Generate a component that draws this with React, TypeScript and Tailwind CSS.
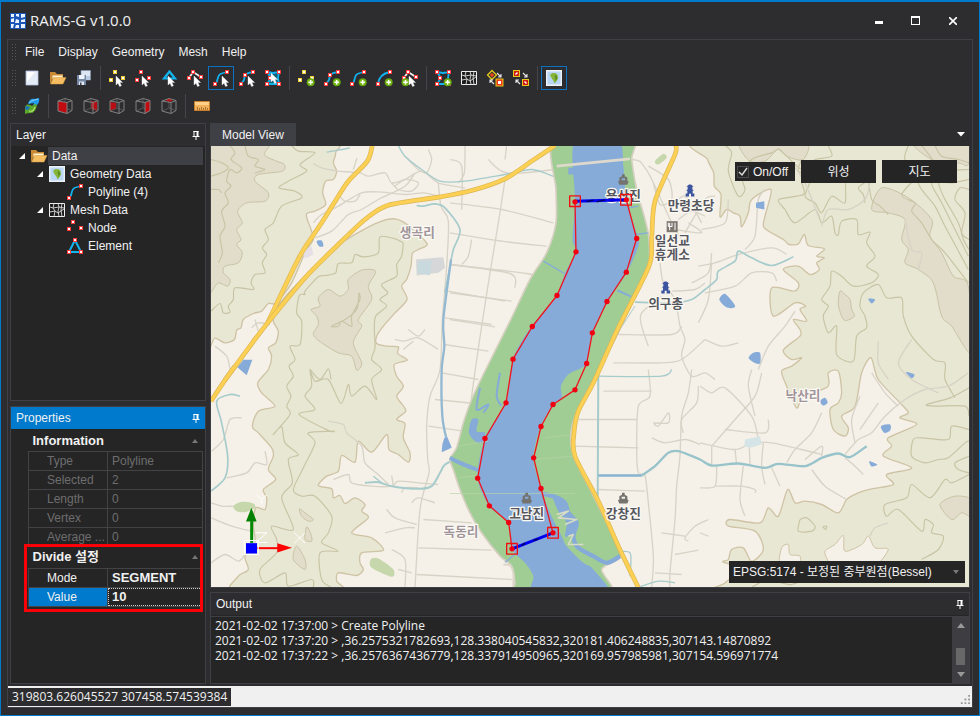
import React, { useState } from "react";

type Kids = { children?: React.ReactNode };

/* ---------- toolbar and tree icons ---------- */

const RED = "#ff3b3b";
const YELLOW = "#f2cf3a";
const CYAN = "#12b4f0";

function Icon({ children }: Kids) {
  return (
    <svg viewBox="0 0 16 16" className="h-4 w-4 shrink-0 overflow-visible" aria-hidden="true">
      {children}
    </svg>
  );
}

function Nodes({ at, color = RED }: { at: number[][]; color?: string }) {
  return (
    <>
      {at.map(([x, y], i) => (
        <g key={i}>
          <rect x={x - 2} y={y - 2} width="4" height="4" fill={color} />
          <rect x={x - 1} y={y - 1} width="2" height="2" fill="#fff" />
        </g>
      ))}
    </>
  );
}

function Cursor({ x = 7, y = 6 }: { x?: number; y?: number }) {
  return (
    <path
      transform={`translate(${x} ${y})`}
      d="M0 0V9L2 7.2L3.6 10.6L5.4 9.8L3.9 6.5H6.6Z"
      fill="#fff"
      stroke="#ddd"
      strokeWidth=".4"
    />
  );
}

function Plus({ x = 12.7, y = 12.3 }: { x?: number; y?: number }) {
  return (
    <g transform={`translate(${x} ${y})`}>
      <circle r="4" fill="#62a30c" />
      <circle r="3" fill="#7dbb1e" />
      <path d="M-2.2 0H2.2M0 -2.2V2.2" stroke="#fff" strokeWidth="1.4" />
    </g>
  );
}

const stroke = (c: string, w = 1.8) => ({ fill: "none", stroke: c, strokeWidth: w });
const cloud = [[6, 2], [2, 10], [14, 8]];
const sCurve = "M2 14C6 12 3 5 8.500 3.500C10 3 12 2.500 14 2";

const DocIcon = () => (
  <Icon>
    <path d="M2 1H14V15H2Z" fill="#e4ecf8" stroke="#b7c6de" strokeWidth=".8" />
    <path d="M3 2H11L3 12Z" fill="#fff" />
  </Icon>
);
const FolderIcon = () => (
  <Icon>
    <path d="M0 2H5L7 4H13V8H3L0 14Z" fill="#c98a35" />
    <path d="M2.500 5.500H12.500V9H2.500Z" fill="#fff3d0" />
    <path d="M3.500 7.500H16L13 14H0.500Z" fill="#f4bd62" stroke="#d99a3d" strokeWidth=".5" />
  </Icon>
);
const SaveIcon = () => (
  <Icon>
    <path d="M5 0.500H14.500V10H5Z" fill="#dce6f3" stroke="#8294ae" strokeWidth=".7" />
    <path d="M1 5H10V15H1Z" fill="#7488a5" />
    <path d="M3 5H8.500V9H3Z" fill="#eef4fc" />
    <path d="M3 11.500H8V15H3Z" fill="#e3e9f2" />
    <path d="M4 12.500H5.500V15H4Z" fill="#445" />
    <path d="M10 10H14V6H10Z" fill="#b7c8e0" />
  </Icon>
);
const PickNodeIcon = () => (
  <Icon><Nodes at={cloud} color={YELLOW} /><Cursor /></Icon>
);
const PickRedNodeIcon = () => (
  <Icon><Nodes at={cloud} /><Cursor /></Icon>
);
const PickFaceIcon = () => (
  <Icon><path d="M8.500 1.500L3 8.500H14Z" {...stroke(CYAN, 2.2)} /><Cursor /></Icon>
);
const PickEdgeIcon = () => (
  <Icon>
    <path d="M2 8L6 2L14 7" {...stroke("#eee")} />
    <Nodes at={[[6, 2], [2, 8], [14, 7]]} /><Cursor />
  </Icon>
);
const PickCurveIcon = () => (
  <Icon><path d={sCurve} {...stroke(CYAN)} /><Nodes at={[[2, 14], [14, 2]]} /><Cursor x={9} /></Icon>
);
const PickPolylineIcon = () => (
  <Icon>
    <path d="M2 14L5 10L6 5L9 3L14 2" {...stroke(CYAN)} />
    <Nodes at={[[2, 14], [6, 5], [14, 2]]} /><Cursor x={9} />
  </Icon>
);
const polygon = "M2 2L8 3L14 2L13 8L14 14H2L6 8Z";
const corners = [[2, 2], [14, 2], [5, 8], [2, 14], [14, 14]];
const PickPolygonIcon = () => (
  <Icon>
    <path d={polygon} fill="#12607a" stroke={CYAN} strokeWidth="1.8" />
    <Nodes at={corners} /><Cursor x={6} y={3} />
  </Icon>
);
const AddNodeIcon = () => (
  <Icon><Nodes at={cloud} color={YELLOW} /><Plus /></Icon>
);
const AddPolylineIcon = () => (
  <Icon>
    <path d="M2 14L5 10L6 5L9 3L14 2" {...stroke(CYAN)} />
    <Nodes at={[[2, 14], [6, 5], [14, 2]]} /><Plus />
  </Icon>
);
const AddCurveIcon = () => (
  <Icon><path d={sCurve} {...stroke(CYAN)} /><Nodes at={[[2, 14], [14, 2]]} /><Plus /></Icon>
);
const AddArcIcon = () => (
  <Icon><path d="M2 14Q3 4 14 2" {...stroke(CYAN)} /><Nodes at={[[2, 14], [14, 2]]} /><Plus /></Icon>
);
const SplitEdgeIcon = () => (
  <Icon>
    <path d="M2 8L6 2L14 7" {...stroke("#eee")} />
    <Nodes at={[[6, 2], [2, 8], [14, 7]]} /><Plus x={3.5} /><Cursor />
  </Icon>
);
const AddPolygonIcon = () => (
  <Icon><path d={polygon} {...stroke(CYAN)} /><Nodes at={corners} /><Plus /></Icon>
);
const MeshIcon = () => (
  <Icon>
    <path d="M.5 1.500H15.500V14.500H.5Z" fill="#1c1c1c" stroke="#eee" />
    <path d="M5 1.500L4 6L6 9L5 14.500M9 1.500L10 5L9 9L10 14.500M13 1.500L12 8L13 14.500M1 5L4 6L10 5L15 6M1 10L6 9L9 11L15 7" {...stroke("#ddd", 0.9)} />
  </Icon>
);
const Arrows = () => (
  <path d="M10 3L14 7M14 4V7H11M7 14L3 10M3 13V10H6" {...stroke("#e8e8e8", 1.1)} />
);
const SwapPointIcon = () => (
  <Icon>
    <path d="M5 .5L9.500 5L5 9.500L.5 5Z" fill="#333" stroke="#e4c91b" strokeWidth="1.300" />
    <path d="M3 5H7M5 3V7" {...stroke("#f04a1c", 1.4)} />
    <Arrows />
    <path d="M8.500 8.500H16.500V16.500H8.500Z" fill="#e4c91b" />
    <path d="M9.500 9.500H15.500V15.500H9.500Z" fill="#f03a1c" />
    <path d="M11 11H14V14H11Z" fill="#fff" />
  </Icon>
);
const SwapCellIcon = () => (
  <Icon>
    <path d="M0 0H7V7H0Z" fill="#e4c91b" />
    <path d="M1 1H6V6H1Z" fill="#d01a12" />
    <path d="M2.500 4.500L4.500 2.500" {...stroke("#fff", 1.4)} />
    <Arrows />
    <path d="M9 9H16V16H9Z" fill="#e4c91b" />
    <path d="M10 10H15V15H10Z" fill="#d01a12" />
    <path d="M11.500 11.500L13.500 13.500" {...stroke("#fff", 1.4)} />
  </Icon>
);
const MapIcon = () => (
  <Icon>
    <path d="M.7 .7H15.300V15.300H.7Z" fill="#b9d6f4" stroke="#eef3f8" strokeWidth="1.400" />
    <path d="M4 5C6 2 11 3 11.500 5L12 8C11.500 11 9 12 9 13.500C7.500 12.500 8 10 6 9Z" fill="#86b53a" />
    <path d="M9 5C12 6 12 9 9 11C10 8 8 7 9 5Z" fill="#5d8f22" />
  </Icon>
);
const LayersIcon = () => (
  <Icon>
    <path d="M4 6C5 1 8 0 11 1L15 0C16 4 14 8 9 8L10 5Z" fill="#1f9be8" />
    <path d="M5 5C8 2 11 2 14 1" {...stroke("#9ddcff", 0.9)} />
    <path d="M1 9C3 5 6 7 8 8L11 6L13 7C12 13 9 16 4 15L1 16Z" fill="#5aa72e" />
    <path d="M2 8L6 9L4 12L1 11Z" fill="#1670c0" />
    <path d="M5 13C8 14 10 12 11 9" {...stroke("#b9e26a", 1.1)} />
  </Icon>
);
function CubeIcon({ face, front }: { face: string; front?: boolean }) {
  return (
    <Icon>
      {!front && <path d={face} fill="#b80d12" />}
      <path d="M8 1V10L1 13M8 10L15 12.500" {...stroke("#5c5c5c", 0.8)} />
      {front && <path d={face} fill="#c00b10" />}
      <path d="M1 3L8 .5L15 2.500V12.500L10 15.500L1 13ZM1 3L10 4.500L15 2.500M10 4.500V15.500" {...stroke("#808080", 1)} />
    </Icon>
  );
}
const RulerIcon = () => (
  <Icon>
    <path d="M.5 3.500H15.500V12.500H.5Z" fill="#f1b05a" stroke="#c87f2b" />
    <path d="M1 4H15V7H1Z" fill="#ffd08a" />
    <path d="M3.500 12V9M5.500 12V10M7.500 12V9M9.500 12V10M11.500 12V9M13.500 12V10" {...stroke("#8b5a1c", 0.7)} />
  </Icon>
);
const CurveIcon = () => (
  <Icon><path d={sCurve} {...stroke(CYAN)} /><Nodes at={[[2, 14], [14, 2]]} /></Icon>
);
const NodeIcon = () => (
  <Icon><Nodes at={[[6, 2], [2, 9], [14, 8]]} /></Icon>
);
const ElementIcon = () => (
  <Icon><path d="M8 2L2 14H14Z" {...stroke(CYAN, 2)} /><Nodes at={[[8, 2], [2, 14], [14, 14]]} /></Icon>
);
const PinIcon = () => (
  <svg viewBox="0 0 8 9" className="h-[9px] w-2" aria-hidden="true">
    <path d="M1.500 .5H6.500M2 0V5.500M5.500 0V5.500M.5 5.500H7.500M4 5.500V9" {...stroke("#fff", 1)} />
    <path d="M4.500 0H6.500V5.500H4.500Z" fill="#fff" />
  </svg>
);
const LogoIcon = () => (
  <svg viewBox="0 0 16 16" className="h-4 w-4" aria-hidden="true">
    <path d="M0 0H16V16H0Z" fill="#1c55b8" />
    <path d="M1 1H4V4H1ZM6 1H9V4L6 3ZM11 1H15V4L11 5ZM1 6L4 5V9H1ZM6 6L9 7V10H5ZM11 7L15 6V9H11ZM1 11H4L3 15H1ZM6 12H9V15H5ZM11 11H15V15H11Z" fill="#e9f2ff" />
  </svg>
);

/* ---------- map ---------- */

const toPoints = (s: string) => s.trim().split(/\s+/).map((p) => p.split(",").map(Number));

/* Catmull-Rom curve through a list of "x,y" points */
function smooth(s: string, closed = false) {
  const p = toPoints(s);
  const n = p.length;
  const at = (i: number) => (closed ? p[(i + n) % n] : p[Math.max(0, Math.min(n - 1, i))]);
  let d = `M${p[0][0]} ${p[0][1]}`;
  for (let i = 0; i < (closed ? n : n - 1); i++) {
    const [a, b, c, e] = [at(i - 1), at(i), at(i + 1), at(i + 2)];
    d += `C${b[0] + (c[0] - a[0]) / 7} ${b[1] + (c[1] - a[1]) / 7} ${c[0] - (e[0] - b[0]) / 7} ${c[1] - (e[1] - b[1]) / 7} ${c[0]} ${c[1]}`;
  }
  return closed ? d + "Z" : d;
}

const Hill = ({ p }: { p: string }) => (
  <path d={smooth(p, true)} fill="#e8e7d3" stroke="#cfc3a5" strokeWidth="4" />
);
const High = ({ p }: { p: string }) => (
  <path d={smooth(p, true)} fill="#e1ddca" stroke="#c9c3a5" strokeWidth="3" />
);
const Contour = ({ p }: { p: string }) => <path d={smooth(p)} {...stroke("#c8c4a5", 3.5)} />;
const Lane = ({ p }: { p: string }) => <path d={smooth(p)} {...stroke("#d8d3c7", 4)} />;
const Brook = ({ p, w = 5 }: { p: string; w?: number }) => <path d={smooth(p)} {...stroke("#a6cbcb", w)} />;
const Water = ({ p }: { p: string }) => <path d={smooth(p, true)} fill="#86abd9" />;
const Green = ({ p }: { p: string }) => <path d={smooth(p, true)} fill="#c5d7ab" />;
function Highway({ p }: { p: string }) {
  const d = smooth(p);
  return (
    <>
      <path d={d} {...stroke("#dcb555", 14)} />
      <path d={d} {...stroke("#fcd153", 10)} />
    </>
  );
}

function Place({ x, y, children, soft }: Kids & { x: number; y: number; soft?: boolean }) {
  return (
    <text
      x={x}
      y={y}
      textAnchor="middle"
      fontSize="38"
      fontWeight="700"
      fill={soft ? "#a0949a" : "#55565e"}
      stroke="#fbf9f4"
      strokeWidth="7"
      strokeLinejoin="round"
      paintOrder="stroke"
      className="font-['Noto_Sans_CJK_KR',sans-serif]"
    >
      {children}
    </text>
  );
}
const Ferry = ({ x, y }: { x: number; y: number }) => (
  <path transform={`translate(${x} ${y})`} d="M-4 -18H4V-12L12 -8V2L16 4L12 14H-12L-16 4L-12 2V-8L-4 -12ZM-5 -6V0H5V-6Z" fill="#75736f" />
);
const Tower = ({ x, y }: { x: number; y: number }) => (
  <path transform={`translate(${x} ${y})`} d="M-3 -20H3L11 -13H7V-6L12 -2H8V7H13V16H3V8H-3V16H-13V7H-8V-2H-12L-7 -6V-13H-11Z" fill="#3b55a0" />
);

const leftBank = "1110,187 1113,337 1056,468 982,561 924,659 903,790 840,897 818,1016 853,1099 911,1149 921,1228";
const rightBank = "1264,181 1295,297 1264,398 1206,486 1162,580 1145,672 1110,751 1044,795 1008,861 986,955 1008,1047 1044,1180";

function MapCanvas() {
  return (
    <svg
      viewBox="18 18 2274 1326"
      preserveAspectRatio="xMidYMid slice"
      className="absolute inset-0 h-full w-full bg-[#f5f1e9]"
      role="img"
      aria-label="Map"
      strokeLinejoin="round"
    >
      {/* western hills */}
      <Hill p="0,0 380,0 392,40 385,70 395,95 385,120 362,125 353,160 362,195 330,215 304,225 318,270 325,300 300,340 260,430 215,490 190,492 170,515 145,522 115,540 108,565 95,572 88,600 60,610 30,595 0,600" />
      <High p="0,0 190,0 178,45 215,65 238,75 232,95 160,105 150,125 190,160 180,185 125,190 98,215 112,250 95,270 108,300 95,315 112,340 100,370 60,380 55,400 75,420 68,440 40,430 0,440" />
      <Contour p="75,18 90,40 78,60 110,85 95,100 75,90 65,125 78,140 60,160 70,190 50,215 60,260 45,290 52,340 40,370" />
      <Contour p="120,18 130,50 160,60 150,80 180,90 150,100" />
      <Contour p="18,60 50,70 70,85 50,100 18,110" />
      <Contour p="18,150 40,150 50,160" />
      <Contour p="260,18 280,35 330,40 285,75 305,95 250,125 222,145 270,155 290,175 230,200 205,250 180,270 190,300 172,325 185,345 172,370 180,400 150,405 138,430 145,450 90,445 85,480 70,500 75,518 55,520 45,492 18,515" />
      <Hill p="570,238 602,252 640,285 667,315 640,330 622,342 618,380 605,420 590,440 606,480 570,520 535,560 515,590 515,612 545,620 580,622 578,642 607,662 568,675 575,710 595,740 575,770 592,795 602,815 575,840 600,852 595,895 615,940 610,968 580,945 552,930 545,885 500,938 460,905 450,968 410,948 400,995 365,1010 340,1038 380,1048 385,1075 405,1068 420,1092 450,1075 480,1095 470,1115 490,1135 440,1180 500,1195 535,1232 470,1240 465,1270 475,1290 455,1308 400,1300 395,1325 405,1360 90,1360 100,1310 130,1290 120,1250 150,1210 145,1160 152,1105 180,1110 185,1075 175,1050 212,1020 190,990 205,950 200,925 160,880 142,860 160,815 210,800 170,760 158,730 190,690 200,650 190,625 212,610 220,575 205,545 215,505 280,430 400,320 425,300 480,268 530,245" />
      <Contour p="595,310 570,298 525,292 520,340 475,352 450,345 440,370 400,372 392,400 362,408 340,412 300,455 300,465 283,468 275,520 290,545 285,615 255,620 270,660 252,680 265,710 245,740 258,770 245,800 255,825 205,885 230,862 240,910 280,945 250,960 262,1030 230,1075 265,1170 200,1160 215,1200 215,1240 165,1290 180,1330 240,1300 250,1340 320,1320 325,1344" />
      <Contour p="595,310 590,350 575,375 575,410 530,435 548,460 525,480 545,500 512,530 508,570 510,625 500,660 530,690 500,720 515,780 480,740 440,770 430,735 408,792 370,720 330,725 315,690 320,740 300,770 330,810 282,825 370,873 385,875 310,880 330,910 295,985 265,1050 290,1070 330,1070 380,1130 370,1180 350,1210 400,1235 345,1240 350,1320 380,1344" />
      <Contour p="315,690 345,720 370,688 378,720" />
      <High p="470,392 512,395 490,440 500,480 460,540 470,560 445,610 470,670 455,692 440,650 400,640 350,610 325,585 340,555 335,530 318,510 345,500 340,475 370,450 405,470 430,450 430,420" />
      <Contour p="462,460 455,510 420,540 380,560 400,560 410,545 440,560 440,530 465,480 462,460" />
      <High p="283,1108 300,1120 325,1140 310,1145 290,1130" />
      <High p="305,1162 318,1185 320,1205 300,1200" />
      <High p="275,1220 300,1260 300,1290 265,1260" />
      <Green p="85,1100 110,1087 145,1092 150,1105 120,1118 95,1115" />
      <Green p="497,1260 520,1257 565,1290 560,1312 500,1285" />
      <path d="M290 335L320 320L325 345L300 358Z" fill="#e6dfe5" />
      <path d="M633 360L690 355L715 353L720 385L700 400L635 408Z" fill="#d5d7d8" />
      <path d="M640 365L680 362L675 408L636 400Z" fill="#c9dade" />

      {/* eastern hills */}
      <Hill p="1505,0 1508,60 1526,100 1528,140 1548,165 1545,232 1565,210 1585,220 1605,230 1610,262 1630,220 1640,180 1698,150 1680,230 1678,265 1735,300 1752,315 1780,313 1798,285 1810,318 1858,328 1835,350 1858,355 1835,370 1843,390 1815,405 1780,380 1735,390 1780,430 1768,455 1700,445 1705,530 1770,490 1802,500 1785,510 1805,545 1765,540 1785,570 1785,590 1735,632 1760,660 1790,655 1760,680 1730,695 1745,740 1775,805 1795,770 1868,742 1870,700 1900,695 1910,760 1900,790 1875,810 1885,870 1920,890 1930,865 1910,830 1950,800 1970,700 1998,655 2020,720 2090,795 2110,820 2085,835 2135,855 2050,895 2060,920 2035,950 2120,985 2045,1005 2065,1035 2000,1048 1960,1060 1925,1080 1900,1120 1850,1095 1800,1085 1770,1090 1748,1050 1720,1130 1690,1105 1665,1150 1575,1140 1570,1160 1650,1175 1675,1230 1640,1265 1615,1225 1580,1230 1570,1260 1555,1268 1620,1290 1560,1330 1570,1360 2320,1360 2320,0" />
      <path d={smooth("1725,1280 1730,1225 1750,1215 1755,1245 1785,1250 1780,1285", true)} fill="#f5f1e9" stroke="#cfc3a5" strokeWidth="3" />
      <path d={smooth("1870,1265 1860,1235 1890,1215 1915,1188 1920,1235 1970,1215 1990,1190 2010,1225 2050,1230 2000,1285 1890,1285", true)} fill="#f5f1e9" stroke="#cfc3a5" strokeWidth="3" />
      <High p="1610,0 1800,0 1795,60 1745,50 1720,28 1680,65 1630,62" />
      <High p="2030,145 2110,175 2180,240 2175,290 2210,340 2245,410 2290,440 2300,640 2240,560 2210,530 2185,430 2140,390 2100,370 2110,330 2090,300 2100,240 2050,220 2000,210" />
      <High p="2290,0 2120,0 2180,60 2260,70 2290,75" />
      <Contour p="1560,18 1580,40 1570,95 1600,170 1620,150 1610,110 1640,60 1700,40 1720,30 1745,50 1790,90 1820,75 1830,60 1880,50 1870,20" />
      <Contour p="1790,60 1780,95 1820,110 1800,170 1830,190 1850,220 1880,170 1920,190 1925,120 1980,125 1960,145 1975,165 1980,190" />
      <Contour p="1790,130 1795,165 1722,180 1740,210 1770,250 1830,210 1850,250 1880,230 1890,280 1900,285 1910,245 1955,240 1960,285 1995,278 1985,310 2010,350 1985,380 2020,405 2000,430 1945,440 1910,410 1880,395 1875,440 1850,480 1870,500 1855,530 1870,580 1895,560 1895,645 1945,665 1955,590 1985,565 1980,530 1965,500 1975,460 2020,435 2045,475 2090,475 2095,530 2120,590 2185,660 2220,670 2220,720 2250,775" />
      <High p="1905,455 1920,465 1935,480 1940,510 1948,530 1925,543 1912,535 1900,495" />
      <Contour p="2110,18 2100,60 2150,90 2090,165 2130,190 2120,215 2150,250 2180,300 2220,340 2290,430" />
      <Contour p="2150,18 2190,80 2140,130 2190,200 2220,260 2290,390" />
      <Contour p="2190,18 2210,50 2260,60 2292,70" />
      <Contour p="2292,120 2240,130 2180,130 2210,190 2255,280 2290,350" />
      <Contour p="2292,90 2230,95 2200,120 2215,170 2260,250 2275,300 2292,330" />
      <Contour p="2292,150 2265,145 2250,180 2280,220 2270,280 2292,300" />
      <Contour p="1990,120 2000,180 2025,200 2050,225" />
      <Contour p="2292,745 2235,775 2165,795 2190,800 2280,800 2292,830" />
      <Contour p="2292,870 2240,860 2230,900 2150,895 2125,900 2120,950 2160,970 2200,960 2230,955 2280,910 2292,905" />
      <Contour p="2292,1005 2240,1030 2220,1020 2175,1075 2120,1035 2105,1075 2040,1095 2045,1130 2080,1110 2150,1175 2160,1140 2185,1155 2180,1180 2215,1190 2200,1230 2150,1260" />
      <High p="2300,1080 2250,1070 2205,1095 2240,1140 2270,1120 2300,1130" />
      <Contour p="2292,950 2250,970 2260,990 2292,1000" />
      <Contour p="1785,1140 1805,1135 1830,1160 1820,1175 1780,1175 1785,1140" />
      <Contour p="1853,1162 1865,1160 1862,1170 1853,1162" />
      <Contour p="1640,1344 1690,1320 1760,1335 1830,1300" />

      {/* lanes */}
      <Lane p="325,72 350,85 400,95 465,100 490,110 540,100 560,130 600,120 650,95 700,130 780,145" />
      <Lane p="325,250 350,225 400,200 470,160 530,158 600,165 655,160 700,170" />
      <Lane p="330,295 380,275 430,225 470,210 520,180 600,140 630,100" />
      <Lane p="560,130 580,150 620,155 640,130 600,120 570,140" />
      <Lane p="670,30 680,60 665,100 640,90 600,50" />
      <Lane p="456,55 445,90" />
      <Lane p="400,165 420,185 450,185 465,165" />
      <Lane p="700,130 708,200 730,245 725,380 712,540 705,690 675,770 665,860 668,960 672,1000 645,1110 630,1344" />
      <Lane p="735,60 770,80 770,210" />
      <Lane p="735,375 915,402 930,445" /><Lane p="730,455 900,485" /><Lane p="720,535 860,555" />
      <Lane p="718,615 850,635" /><Lane p="710,700 820,720" /><Lane p="690,780 810,792" />
      <Lane p="670,860 775,875" /><Lane p="655,1140 800,1150" /><Lane p="640,1225 860,1232" /><Lane p="635,1305 920,1320" />
      <Lane p="900,120 880,250 855,400 830,560 808,710 790,850" />
      <Lane p="735,190 890,210 1045,250" /><Lane p="735,280 890,305 1025,320" />
      <Lane p="735,375 965,402 985,415" /><Lane p="735,460 920,485" /><Lane p="735,540 870,562" />
      <Lane p="780,18 778,100 760,130" /><Lane p="850,60 905,100 1050,90 1100,75 1280,60 1320,85 1350,140 1400,250 1430,300" />
      <Lane p="900,60 905,18" /><Lane p="800,300 790,350 770,375" />
      <Lane p="570,600 600,605 640,595 700,630" /><Lane p="610,570 640,590 660,570" /><Lane p="595,630 625,605" />
      <Lane p="385,1020 430,1005 440,1030 500,1040 560,1040 580,1025 640,1030 700,1035" />
      <Lane p="370,845 415,855 425,880 470,920 480,970 520,1005 550,1035" />
      <Lane p="560,1008 565,1040" /><Lane p="590,1060 600,1045 640,1045" />
      <Lane p="545,1110 570,1135 635,1155" /><Lane p="540,1180 600,1165 630,1165" /><Lane p="620,1090 640,1075 690,1090" />
      <Lane p="560,1230 600,1260 600,1344" /><Lane p="580,1290 620,1300" />
      <Lane p="30,620 65,650 75,690" /><Lane p="140,565 160,550 195,555" /><Lane p="150,540 160,575" />
      <Lane p="18,1090 50,1100 85,1100" /><Lane p="18,1135 80,1160 140,1175" /><Lane p="18,1270 60,1245 100,1265 120,1245" />
      <Lane p="20,935 55,900 75,840 110,835" /><Lane p="65,1015 125,1000 150,970 185,975 180,935" />
      <Lane p="1440,280 1500,180 1530,170" /><Lane p="1330,80 1390,120 1400,180 1365,195 1345,130" />
      <Lane p="1400,205 1440,170 1490,250" /><Lane p="1420,240 1460,215 1500,230" /><Lane p="1410,270 1490,280 1450,250" />
      <Lane p="1370,470 1310,520 1310,560 1330,620" /><Lane p="1240,585 1400,585 1430,560" /><Lane p="1225,670 1370,670 1430,660 1500,600" />
      <Lane p="1365,370 1375,430 1410,480 1425,560 1440,600 1430,650 1460,710 1500,700 1530,720" />
      <Lane p="1400,455 1470,450 1500,430" /><Lane p="1520,340 1510,400 1460,430" />
      <Lane p="1195,755 1340,755" /><Lane p="1120,840 1295,840" /><Lane p="1105,920 1300,925" /><Lane p="1180,1050 1320,1055" />
      <Lane p="1330,690 1335,770 1300,800 1295,930 1300,1000 1320,1008 1330,1090 1345,1250 1340,1344" />
      <Lane p="1460,690 1450,760 1430,830 1425,950 1415,1040 1410,1140 1395,1300 1395,1344" />
      <Lane p="1345,850 1360,860 1390,820 1390,850 1345,850" /><Lane p="1340,895 1380,910 1440,900 1485,915" />
      <Lane p="1480,740 1475,790 1430,840 1435,880" /><Lane p="1370,1180 1440,1190" />
      <Lane p="1410,1245 1480,1232" /><Lane p="1350,1300 1430,1305" /><Lane p="1510,1140 1470,1160 1440,1195 1450,1205" />
      <Lane p="1485,740 1520,760 1560,745 1640,830 1660,900" /><Lane p="1640,690 1630,740 1650,830" /><Lane p="1520,920 1590,840 1650,770 1670,700" />
      <Lane p="1520,920 1520,975" /><Lane p="1485,910 1590,930 1640,910 1700,910 1790,930 1850,945" /><Lane p="1560,870 1680,880 1690,840" />
      <Lane p="1590,930 1595,975" /><Lane p="1632,900 1635,975" /><Lane p="1675,910 1670,980 1680,1035" /><Lane p="1535,980 1530,1040 1485,1045" />
      <Lane p="1530,1040 1610,1040 1650,1050 1650,1060" /><Lane p="1615,980 1605,1080 1620,1130" /><Lane p="1700,985 1725,1040" />
      <Lane p="1745,970 1770,930 1820,880 1850,820" /><Lane p="1800,960 1850,920 1850,950" /><Lane p="1820,990 1860,1040 1925,1080" />
      <Lane p="1920,945 1960,900 2000,880 2040,830 2100,780 2160,750 2230,740 2290,700" /><Lane p="1920,955 1950,980 1975,1005" />
      <Lane p="1950,910 1940,840 1965,770" /><Lane p="1965,870 2020,790" /><Lane p="2000,700 2040,760 2080,800" />
      <Lane p="1490,270 1560,250 1570,180" /><Lane p="1620,330 1650,290 1660,180 1680,150" /><Lane p="1480,380 1530,370 1600,345 1700,325 1745,345" />
      <Lane p="1500,460 1590,440 1640,400 1700,400 1715,425" /><Lane p="1520,370 1510,480 1480,550" /><Lane p="1500,600 1550,620 1600,610" />
      <Lane p="1660,690 1690,620 1740,560 1770,515" /><Lane p="1850,260 1870,210 1930,210 1980,180 1995,130" /><Lane p="1760,70 1800,130 1840,230" />
      <Lane p="2120,600 2080,670 2120,720 2200,760" /><Lane p="2020,605 2020,670 2050,720" />
      <Lane p="2100,240 2120,330 2150,340 2140,390" /><Lane p="1995,1190 2010,1165 2050,1150" /><Lane p="1485,1180 1510,1190" />
      <path d="M1620 900L1665 890L1670 915L1635 925L1618 920Z" fill="#d5e4e6" />

      {/* brooks and ponds */}
      <Brook w={4} p="365,38 400,32 435,25" /><Brook w={4} p="580,18 600,50 650,90 705,125 780,125 900,105 980,90 1050,112" />
      <Brook p="635,198 655,200 690,193 720,205 765,270 745,330 735,380 720,460" />
      <path d={smooth("738,360 715,540 718,620 710,690 712,830 725,900 735,920")} {...stroke("#93b9d2", 7)} />
      <Brook w={6} p="480,1030 520,1028 560,1040 640,1048 680,1040 705,1000 720,975 760,955" />
      <Brook p="105,770 75,765 35,785 50,850 68,950 60,1015 18,1055" />
      <Brook w={4} p="505,1010 530,1030" />
      <Brook w={6} p="1180,690 1178,1090" />
      <path d="M1180 1008H1310" {...stroke("#86b3cf", 8)} />
      <path d={smooth("1310,1008 1350,980 1390,940 1420,935 1485,960 1520,978 1600,972 1680,985 1720,973 1800,980 1850,955 1900,942 1935,953 1985,920")} {...stroke("#98c3ca", 7)} />
      <Brook w={4} p="1180,710 1370,710 1400,690" />
      <Brook p="1290,488 1400,490 1460,480 1500,450 1535,420 1540,395 1590,365 1600,335 1640,355 1700,378 1765,352" />
      <Brook w={4} p="1225,1240 1275,1240 1275,1310" /><Brook w={4} p="1300,1344 1360,1325 1410,1330" />
      <Brook w={3} p="1290,500 1160,700" />
      <Water p="335,305 350,303 355,320 342,320" />
      <path d="M115 661L142 661L125 707L97 683Z" fill="#86abd9" />
      <path d="M1653 190L1678 185L1678 210L1653 205Z" fill="#86abd9" />
      <Water p="1543,480 1560,463 1590,498 1580,506 1562,502" />
      <Water p="1631,655 1645,640 1665,640 1665,672 1645,668" />
      <Water p="1990,478 2010,480 2000,492" /><Water p="2103,698 2128,705 2120,716" />
      <Water p="1845,785 1860,775 1868,790 1855,798" /><Water p="2028,860 2055,855 2056,872 2038,880" /><Water p="1993,965 2017,975 2000,981" />
      <path d="M718 895L728 895L740 925L710 938L712 915Z" fill="#86abd9" />
      <Green p="1350,65 1375,43 1385,55 1360,75" />

      {/* river corridor */}
      <path d={smooth("1050,0 1053,150 1053,250 1025,340 975,420 915,545 835,705 800,780 775,850 755,925 735,958 745,990 765,1050 795,1120 830,1180 885,1250 920,1280 930,1330 935,1370 1215,1370 1190,1290 1240,1260 1245,1235 1195,1130 1155,1050 1107,955 1097,890 1110,830 1145,760 1235,590 1295,460 1330,390 1332,300 1320,240 1295,150 1280,60 1276,0", true)} fill="#9fcd94" stroke="#d5cfc0" strokeWidth="5" />
      <path d={smooth("1110,0 1110,185 1103,300 1113,335 1080,400 1055,470 980,560 925,655 903,790 840,895 818,1015 853,1100 910,1150 922,1230 960,1270 985,1310 990,1370 1210,1370 1165,1290 1135,1270 1085,1220 1070,1190 1035,1120 1007,1045 985,955 1007,860 1045,795 1070,775 1068,740 1090,705 1130,685 1145,670 1163,580 1205,490 1265,400 1300,320 1297,290 1265,180 1255,80 1238,0", true)} fill="#86abd9" />
      <path d={smooth("1010,1062 1050,1072 1080,1090 1090,1120 1115,1150 1105,1190 1120,1225 1165,1250 1205,1270 1245,1250")} {...stroke("#86abd9", 13)} />
      <Water p="1045,1075 1075,1082 1080,1110 1110,1135 1115,1160 1100,1185 1080,1190 1085,1150 1060,1115" />
      <path d={smooth("735,955 765,970 820,992")} {...stroke("#86abd9", 12)} />
      <path d={smooth("885,700 875,770 890,800")} {...stroke("#86abd9", 6)} />
      <path d={smooth("825,745 815,810 850,795 835,820")} {...stroke("#86abd9", 6)} />
      <Water p="800,840 820,840 815,875 840,880 835,910 810,905 792,880" />
      <path d="M1090 85H1112V105H1090ZM1235 455L1280 475L1278 468L1240 450Z" fill="#86abd9" />
      <path d="M1015 365L1078 402M900 1268L930 1245M1270 205L1300 200M1290 285L1330 280" {...stroke("#86abd9", 4)} />
      <path d="M1055 1125L1090 1115L1060 1135L1115 1140L1080 1155M1090 1190L1105 1185L1090 1215L1135 1215" {...stroke("#d9dcc5", 5)} />
      <path d={smooth("895,1275 915,1278 925,1300 925,1344")} {...stroke("#ddd7c9", 6)} />
      <path d="M1055 80L1275 58" {...stroke("#ded9cc", 8)} />
      <path d="M735 1062H1110M760 920L850 905M760 1015L820 1008M1020 895L1100 885M990 960L1105 950" {...stroke("#b7d4a8", 2)} />

      {/* highways */}
      <Highway p="502,18 487,65 430,125 400,170 350,250 290,340 240,440 188,550" />
      <Highway p="60,722 120,640 188,550 300,415 400,315 480,240 550,197 700,173 800,153 900,118 980,65 1050,18" />
      <Highway p="18,785 60,722 90,680" />
      <Highway p="1412,18 1410,45 1350,185 1340,300 1332,380 1240,565 1165,730 1120,815 1107,880 1110,950 1180,1085 1240,1220 1300,1344" />

      <Ferry x={1255} y={122} /><Ferry x={965} y={1078} /><Ferry x={1255} y={1078} />
      <Tower x={1455} y={155} /><Tower x={1382} y={446} />
      <rect x="1385" y="245" width="33" height="33" fill="#7d7770" />
      <path d="M1394 250V272M1401 250V262M1390 250V261H1401M1410 250V272" {...stroke("#fff", 3)} />
      <Place x={1255} y={180}>용산진</Place>
      <Place x={1458} y={210}>만령초당</Place>
      <Place x={1402} y={317}>
        일선교
        <tspan x="1402" dy="42">휴게소</tspan>
      </Place>
      <Place x={1382} y={505}>의구총</Place>
      <Place x={965} y={1135}>고남진</Place>
      <Place x={1255} y={1135}>강창진</Place>
      <Place x={637} y={293} soft>생곡리</Place>
      <Place x={768} y={1190} soft>독동리</Place>
      <Place x={1794} y={782} soft>낙산리</Place>

      {/* edited geometry */}
      <path d="M1110 185L1264 181M921 1228L1044 1180" {...stroke("#0000f0", 9)} />
      <path d="M1145 186L1165 182M1175 187L1200 181M950 1218L960 1211M985 1203L1000 1198" {...stroke("#000060", 4)} />
      <polyline points={leftBank} {...stroke("#f01420", 4)} />
      <polyline points={rightBank} {...stroke("#f01420", 4)} />
      {toPoints(`${leftBank} ${rightBank}`).map(([x, y], i) => (
        <circle key={i} cx={x} cy={y} r="8" fill="#f00010" />
      ))}
      {[[1110, 185], [1263, 181], [921, 1228], [1044, 1180]].map(([x, y]) => (
        <rect key={x} x={x - 16} y={y - 16} width="32" height="32" {...stroke("#f01010", 4)} />
      ))}

      {/* axis triad */}
      <path d="M140 1210V1145" {...stroke("#008a00", 9)} />
      <path d="M139 1105L155 1146H123Z" fill="#008000" />
      <path d="M157 1226H225" {...stroke("#f00", 6)} />
      <path d="M261 1225L217 1211V1239Z" fill="#f00" />
      <rect x="118" y="1203" width="42" height="42" {...stroke("#fff", 3)} />
      <rect x="123" y="1211" width="33" height="31" fill="#0000ff" />
      <path d="M155 1066L170 1080L186 1066M170 1080V1093M152 1180H186L152 1209H186M268 1180L300 1211M300 1180L268 1211" {...stroke("#fff", 3)} />
    </svg>
  );
}

/* ---------- window parts ---------- */

const Grip = () => (
  <span
    aria-hidden="true"
    className="mr-[3px] h-[18px] w-[5px] self-center bg-[radial-gradient(#55555a_1px,transparent_1px)] bg-[size:3px_3px]"
  />
);
const Separator = () => <span aria-hidden="true" className="mx-[3px] h-6 w-px bg-[#46464a]" />;

function Tool({ label, active, children }: Kids & { label: string; active?: boolean }) {
  return (
    <button
      type="button"
      aria-label={label}
      aria-pressed={active}
      className={`flex h-6 w-[26px] items-center justify-center border ${active ? "border-[#0a72c0]" : "border-transparent"}`}
    >
      {children}
    </button>
  );
}

function PanelHeader({ title, active }: { title: string; active?: boolean }) {
  return (
    <header className={`flex h-[22px] shrink-0 items-center justify-between px-[5px] ${active ? "bg-[#007acc]" : "bg-[#2d2d30]"}`}>
      <h2>{title}</h2>
      <button type="button" aria-label={`Pin ${title}`}><PinIcon /></button>
    </header>
  );
}

function TreeRow({ indent, open, icon, selected, children }: Kids & { indent: string; open?: boolean; icon: React.ReactNode; selected?: boolean }) {
  return (
    <li className={`flex h-[18px] items-center ${indent}`}>
      <span className="flex w-3 shrink-0">
        {open && <svg viewBox="0 0 6 6" className="h-[6px] w-[6px]" aria-hidden="true"><path d="M6 0V6H0Z" fill="#fff" /></svg>}
      </span>
      {icon}
      <span className={`ml-px flex h-[18px] flex-1 items-center pl-1 ${selected ? "bg-[#3f3f46]" : ""}`}>{children}</span>
    </li>
  );
}

function Category({ height, children }: Kids & { height: string }) {
  return (
    <tr className={`text-[#f1f1f1] ${height}`}>
      <th colSpan={2} scope="colgroup" className="pr-[5px] pl-1 text-left text-[13px] font-bold">
        <span className="flex items-center justify-between">
          {children}
          <svg viewBox="0 0 6 4" className="h-1 w-[6px]" aria-hidden="true"><path d="M3 0L6 4H0Z" fill="#777" /></svg>
        </span>
      </th>
    </tr>
  );
}

const info = [["Type", "Polyline"], ["Selected", "2"], ["Length", "0"], ["Vertex", "0"], ["Average ...", "0"]];
const lineCell = "border border-[#434346] h-[19px] py-0";

function Properties() {
  const [value, setValue] = useState("10");
  return (
    <section className="flex h-[278px] flex-col border border-[#3f3f46] bg-[#252526]">
      <PanelHeader title="Properties" active />
      <div className="relative mx-[2px] mt-[2px] pl-[15px]">
        <table className="w-full table-fixed border-collapse leading-4">
          <colgroup><col className="w-[79px]" /><col /></colgroup>
          <tbody className="text-[#6d6d6d]">
            <Category height="h-5">Information</Category>
            {info.map(([k, v]) => (
              <tr key={k}>
                <th scope="row" className={`${lineCell} pl-[18px] text-left font-normal whitespace-nowrap`}>{k}</th>
                <td className={`${lineCell} pl-1`}>{v}</td>
              </tr>
            ))}
          </tbody>
          <tbody>
            <Category height="h-[22px]">Divide 설정</Category>
            <tr>
              <th scope="row" className={`${lineCell} pl-[18px] text-left font-normal`}>Mode</th>
              <td className={`${lineCell} pl-1 text-[13px] font-bold`}>SEGMENT</td>
            </tr>
            <tr>
              <th scope="row" className={`${lineCell} bg-[#007acc] pl-[18px] text-left font-normal`}>
                <label htmlFor="divide-value">Value</label>
              </th>
              <td className={`${lineCell} px-0`}>
                <input
                  id="divide-value"
                  value={value}
                  onChange={(e) => setValue(e.target.value)}
                  className="block h-[18px] w-full border border-dotted border-[#d0d0d0] bg-transparent pl-[3px] text-[13px] font-bold outline-none"
                />
              </td>
            </tr>
          </tbody>
        </table>
        <div className="pointer-events-none absolute right-0 bottom-[-5px] left-[11px] h-[68px] border-[3px] border-[#fb0007]" />
      </div>
    </section>
  );
}

const log = [
  "2021-02-02 17:37:00 > Create Polyline",
  "2021-02-02 17:37:20 > ,36.2575321782693,128.338040545832,320181.406248835,307143.14870892",
  "2021-02-02 17:37:22 > ,36.2576367436779,128.337914950965,320169.957985981,307154.596971774",
];
const overlay = "bg-[#252526] text-[#f1f1f1]";

export default function App() {
  return (
    <div className="flex h-screen flex-col border border-[#007acc] border-t-2 bg-[#2d2d30] px-[6px] pb-[7px] font-['Liberation_Sans','Noto_Sans_CJK_KR',sans-serif] text-[12px] text-[#f1f1f1]">
      <header className="flex h-[37px] shrink-0 items-center pl-[3px]">
        <LogoIcon />
        <h1 className="ml-1 font-['Open_Sans',sans-serif] text-[15px]">RAMS-G v1.0.0</h1>
        <div className="ml-auto flex">
          <button type="button" aria-label="Minimize" className="flex h-6 w-9 items-center justify-center">
            <span className="mt-1 h-[3px] w-2 bg-white" />
          </button>
          <button type="button" aria-label="Maximize" className="flex h-6 w-9 items-center justify-center">
            <span className="h-[9px] w-[9px] border border-t-2 border-white" />
          </button>
          <button type="button" aria-label="Close" className="flex h-6 w-10 items-center justify-center">
            <svg viewBox="0 0 8 8" className="h-2 w-2" aria-hidden="true"><path d="M0 0L8 8M8 0L0 8" {...stroke("#fff", 1.6)} /></svg>
          </button>
        </div>
      </header>

      <div className="flex min-h-0 flex-1 flex-col border border-[#3f3f46]">
        <nav className="flex h-6 shrink-0 items-center pl-[3px]">
          <Grip />
          <div className="flex gap-[14px] pl-[6px]">
            {["File", "Display", "Geometry", "Mesh", "Help"].map((m) => (
              <button key={m} type="button">{m}</button>
            ))}
          </div>
        </nav>
        <div className="flex h-7 shrink-0 items-center pl-[3px]">
          <Grip />
          <Tool label="New"><DocIcon /></Tool>
          <Tool label="Open"><FolderIcon /></Tool>
          <Tool label="Save"><SaveIcon /></Tool>
          <Separator />
          <Tool label="Select point"><PickNodeIcon /></Tool>
          <Tool label="Select node"><PickRedNodeIcon /></Tool>
          <Tool label="Select element"><PickFaceIcon /></Tool>
          <Tool label="Select edge"><PickEdgeIcon /></Tool>
          <Tool label="Select curve" active><PickCurveIcon /></Tool>
          <Tool label="Select polyline"><PickPolylineIcon /></Tool>
          <Tool label="Select polygon"><PickPolygonIcon /></Tool>
          <Separator />
          <Tool label="Add point"><AddNodeIcon /></Tool>
          <Tool label="Add polyline"><AddPolylineIcon /></Tool>
          <Tool label="Add curve"><AddCurveIcon /></Tool>
          <Tool label="Add arc"><AddArcIcon /></Tool>
          <Tool label="Split edge"><SplitEdgeIcon /></Tool>
          <Separator />
          <Tool label="Add polygon"><AddPolygonIcon /></Tool>
          <Tool label="Create mesh"><MeshIcon /></Tool>
          <Tool label="Swap points"><SwapPointIcon /></Tool>
          <Tool label="Swap cells"><SwapCellIcon /></Tool>
          <Separator />
          <Tool label="Background map" active><MapIcon /></Tool>
        </div>
        <div className="flex h-7 shrink-0 items-center pl-[3px]">
          <Grip />
          <Tool label="Isometric"><LayersIcon /></Tool>
          <Separator />
          <Tool label="Front"><CubeIcon front face="M1 3L10 4.500V15.500L1 13Z" /></Tool>
          <Tool label="Back"><CubeIcon face="M8 3L14 4V13L8 11Z" /></Tool>
          <Tool label="Left"><CubeIcon face="M1 4L7 5V11L1 13Z" /></Tool>
          <Tool label="Right"><CubeIcon front face="M10 4.500L15 2.500V12.500L10 15.500Z" /></Tool>
          <Tool label="Top"><CubeIcon front face="M4 2L8 .5L12 2L9 4Z" /></Tool>
          <Separator />
          <Tool label="Measure"><RulerIcon /></Tool>
        </div>

        <main className="mt-[3px] flex min-h-0 flex-1 gap-1 px-[2px] pb-[2px]">
          <aside className="flex w-[196px] shrink-0 flex-col gap-[5px]">
            <section className="flex min-h-0 flex-1 flex-col border border-[#3f3f46] bg-[#252526]">
              <PanelHeader title="Layer" />
              <ul className="pt-px pr-[2px]">
                <TreeRow indent="pl-[8px]" open selected icon={<FolderIcon />}>Data</TreeRow>
                <TreeRow indent="pl-[26px]" open icon={<MapIcon />}>Geometry Data</TreeRow>
                <TreeRow indent="pl-[44px]" icon={<CurveIcon />}>Polyline (4)</TreeRow>
                <TreeRow indent="pl-[26px]" open icon={<MeshIcon />}>Mesh Data</TreeRow>
                <TreeRow indent="pl-[44px]" icon={<NodeIcon />}>Node</TreeRow>
                <TreeRow indent="pl-[44px]" icon={<ElementIcon />}>Element</TreeRow>
              </ul>
            </section>
            <Properties />
          </aside>

          <div className="flex min-w-0 flex-1 flex-col">
            <div className="flex h-[23px] shrink-0 items-center justify-between pr-[5px]">
              <button type="button" className="h-[23px] bg-[#3f3f46] px-3">Model View</button>
              <button type="button" aria-label="Open views">
                <svg viewBox="0 0 8 5" className="h-[5px] w-2" aria-hidden="true"><path d="M0 0H8L4 4.500Z" fill="#fff" /></svg>
              </button>
            </div>
            <section className="relative min-h-0 flex-1 overflow-hidden border border-t-0 border-[#3f3f46]">
              <MapCanvas />
              <div className="absolute top-[14px] right-3 flex items-center gap-[6px]">
                <label className={`flex h-[19px] w-[60px] items-center gap-1 pl-[2px] ${overlay}`}>
                  <span className="relative flex h-3 w-3">
                    <input type="checkbox" defaultChecked className="peer h-3 w-3 appearance-none border border-[#4a4a4e]" />
                    <svg viewBox="0 0 12 12" className="pointer-events-none absolute inset-0 hidden h-3 w-3 peer-checked:block" aria-hidden="true">
                      <path d="M2 6L5 9L10 2" {...stroke("#ddd", 1.4)} />
                    </svg>
                  </span>
                  On/Off
                </label>
                <button type="button" className={`h-[23px] w-[75px] ${overlay}`}>위성</button>
                <button type="button" className={`h-[23px] w-[75px] ${overlay}`}>지도</button>
              </div>
              <div className="absolute right-1 bottom-1 h-[22px] w-[236px]">
                <select aria-label="Coordinate system" className={`h-full w-full appearance-none pl-1 ${overlay}`}>
                  <option>EPSG:5174 - 보정된 중부원점(Bessel)</option>
                </select>
                <svg viewBox="0 0 6 4" className="pointer-events-none absolute top-[9px] right-[6px] h-1 w-[6px]" aria-hidden="true"><path d="M0 0H6L3 4Z" fill="#777" /></svg>
              </div>
            </section>
            <section className="mt-1 flex h-[92px] shrink-0 flex-col border border-[#3f3f46] bg-[#252526]">
              <PanelHeader title="Output" />
              <div className="mt-px flex min-h-0 flex-1 border-t border-[#3f3f46]">
                <div className="flex-1 pt-px pl-1 font-['Open_Sans',sans-serif] leading-[15px]">
                  {log.map((l) => <p key={l}>{l}</p>)}
                </div>
                <div aria-hidden="true" className="flex w-[17px] flex-col items-center bg-[#3e3e42] py-[6px]">
                  <svg viewBox="0 0 8 5" className="h-[5px] w-2"><path d="M4 0L8 5H0Z" fill="#999" /></svg>
                  <span className="mt-5 h-[17px] w-[9px] bg-[#686868]" />
                  <svg viewBox="0 0 8 5" className="mt-auto h-[5px] w-2"><path d="M0 0H8L4 5Z" fill="#999" /></svg>
                </div>
              </div>
            </section>
          </div>
        </main>

        <footer className="flex h-[21px] shrink-0 items-end justify-between bg-[#f0f0f0] font-['Open_Sans',sans-serif]">
          <output className="mb-px flex h-[18px] items-center bg-[#2d2d30] px-1">319803.626045527 307458.574539384</output>
          <svg viewBox="0 0 12 12" className="m-[2px] h-[11px] w-[11px]" aria-hidden="true">
            <path d="M10 1h2v2h-2zM6 5h2v2h-2zM10 5h2v2h-2zM2 9h2v2h-2zM6 9h2v2h-2zM10 9h2v2h-2z" fill="#999" />
          </svg>
        </footer>
      </div>
    </div>
  );
}
